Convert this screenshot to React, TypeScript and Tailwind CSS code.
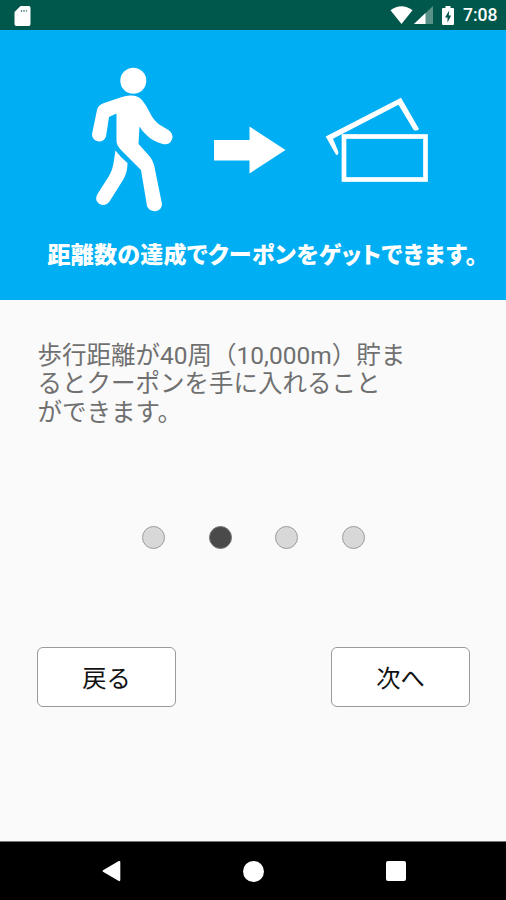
const BODY_LINES = [
  '歩行距離が40周（10,000m）貯ま',
  'るとクーポンを手に入れること',
  'ができます。',
];

const STEPS = [0, 1, 2, 3];
const CURRENT_STEP = 1;

function StatusBar() {
  return (
    <div className="flex items-center h-[30px] shrink-0 bg-[#00574b] pl-[14px] pr-[9px] text-white">
      {/* SD card */}
      <svg width="17" height="20" viewBox="0 0 17 20" className="mt-px">
        <path d="M6.500 0h8.300Q16.500 0 16.500 1.800v16.400q0 1.800-1.800 1.800H2.300Q.500 20 .500 18.200V6z" fill="#fff" />
        <path d="M7.500 4v2M10 4v2M12.500 4v1.500" stroke="#5f8f88" strokeWidth="1.300" />
      </svg>
      <div className="flex items-center ml-auto">
        {/* wifi */}
        <svg width="23" height="18" viewBox="0 0 23 18">
          <path d="M.5 4.200Q11.500-3.500 22.500 4.200L11.500 18z" fill="#fff" />
        </svg>
        {/* signal */}
        <svg width="19" height="18" viewBox="0 0 19 18" className="ml-px">
          <path d="M0 18L19 0v18z" fill="#fff" fillOpacity="0.35" />
          <path d="M0 18L11.500 7v11z" fill="#fff" />
        </svg>
        {/* battery */}
        <svg width="12" height="19" viewBox="0 0 12 19" className="ml-[9px]">
          <path d="M3.500 0h5v2H11q1 0 1 1v15q0 1-1 1H1q-1 0-1-1V3q0-1 1-1h2.500z" fill="#fff" />
          <path d="M7.200 4.500L3 11.500h2.500v5L9.200 9.500H6.800z" fill="#00574b" />
        </svg>
        <span className="ml-[9px] mt-[2px] w-[34px] font-['Roboto'] text-[17.500px] leading-none font-medium whitespace-nowrap">
          7:08
        </span>
      </div>
    </div>
  );
}

function Walker() {
  return (
    <svg width="82" height="146" viewBox="92 67 82 146" className="shrink-0">
      <circle cx="133.300" cy="80.700" r="13" fill="#fff" />
      <path
        d="M130 95.500Q137 95 141 99Q145 103 150 113Q154 121 160 125L168.500 130Q174 134 172 139.500Q169 146 162 143.800Q152 141 146 134.500Q142 131 139.500 126.500L138.500 144L148.500 155Q153 160 154.500 167L162 204Q162 209 157 211Q149 212 147 206L141 170L123 152Q116.500 146 116.500 141V113.500L109 117L106 136.500Q104 141.500 99 141.500Q92 140.500 92 134L97 110Q98 105 104 103L122 97Q126 95.500 130 95.500Z"
        fill="#fff"
      />
      <path
        d="M115.500 150.500Q121 158 127.500 163Q127.500 173 123 180L109.500 201.500Q105 207 99.500 204Q94 200 97.500 194L109 176Q113 169 114 160Z"
        fill="#fff"
      />
    </svg>
  );
}

function Arrow() {
  return (
    <svg width="72" height="48" viewBox="214 126 72 48" className="shrink-0">
      <path d="M214 140h35.500v-13.500L285.500 150L249.500 173.500V160.500H214z" fill="#fff" />
    </svg>
  );
}

function Coupons() {
  return (
    <svg width="104" height="86" viewBox="325 97 104 86" className="shrink-0">
      <path
        d="M336 154.800Q338.700 155.500 338.300 151.500L333 138.800L398.500 104.800L413.700 130Q417 131.500 419 129L401 97.800L325.700 136.500z"
        fill="#fff"
      />
      <rect x="344" y="136.500" width="81.500" height="43" fill="none" stroke="#fff" strokeWidth="4.700" />
    </svg>
  );
}

function Banner() {
  return (
    <div className="flex flex-col h-[270px] shrink-0 bg-[#00aef3]">
      <div className="flex pl-[92px] pt-[37px] h-[205px]">
        <Walker />
        <div className="ml-10 mt-[59px]">
          <Arrow />
        </div>
        <div className="ml-[39px] mt-[30px]">
          <Coupons />
        </div>
      </div>
      <h1 className="pl-[47.500px] flex whitespace-nowrap font-['Noto_Sans_CJK_JP',sans-serif] text-[23px] leading-[37px] font-black text-white [font-feature-settings:'palt']">
        <span className="tracking-[0.250px]">距離数の達成で</span>
        <span className="tracking-[0.600px]">クーポンをゲット</span>
        <span className="tracking-[1px]">できます。</span>
      </h1>
    </div>
  );
}

function StepDots() {
  return (
    <div className="flex justify-center gap-[43.500px] pl-px mt-[98.500px]">
      {STEPS.map((step) => (
        <span
          key={step}
          className={
            step === CURRENT_STEP
              ? 'size-[23px] rounded-full border border-[#777777] bg-[#4a4a4a]'
              : 'size-[23px] rounded-full border border-[#9c9c9c] bg-[#d8d8d8]'
          }
        />
      ))}
    </div>
  );
}

function NavButton({ label }: { label: string }) {
  return (
    <button className="w-[139px] h-[60px] rounded-[6px] border border-[#9a9a9a] bg-white pt-[3px] text-[24.300px] text-[#111111]">
      {label}
    </button>
  );
}

function SystemNav() {
  return (
    <div className="flex items-center justify-between h-[59px] shrink-0 bg-black border-t border-[#777777] pl-[102px] pr-[100px]">
      <svg width="19" height="22" viewBox="0 0 19 22">
        <path d="M1 10.200L16.800 1Q18.300.500 18.300 2v18q0 1.500-1.500 1L1 11.800Q0 11 1 10.200z" fill="#fff" />
      </svg>
      <span className="size-[21px] rounded-full bg-white" />
      <span className="size-5 rounded-[2px] bg-white" />
    </div>
  );
}

export default function App() {
  return (
    <div className="flex flex-col w-[506px] h-[900px] overflow-hidden bg-[#fafafa] font-['Roboto','Noto_Sans_CJK_JP',sans-serif]">
      <StatusBar />
      <Banner />
      <main className="flex flex-col flex-1">
        <p className="pl-[37.500px] mt-[41.500px] text-[24.500px] leading-[28.800px] text-[#707070] whitespace-nowrap">
          {BODY_LINES.map((line) => (
            <span key={line} className="block">
              {line}
            </span>
          ))}
        </p>
        <StepDots />
        <div className="flex justify-between pl-[37px] pr-[36px] mt-[98px]">
          <NavButton label="戻る" />
          <NavButton label="次へ" />
        </div>
      </main>
      <SystemNav />
    </div>
  );
}
